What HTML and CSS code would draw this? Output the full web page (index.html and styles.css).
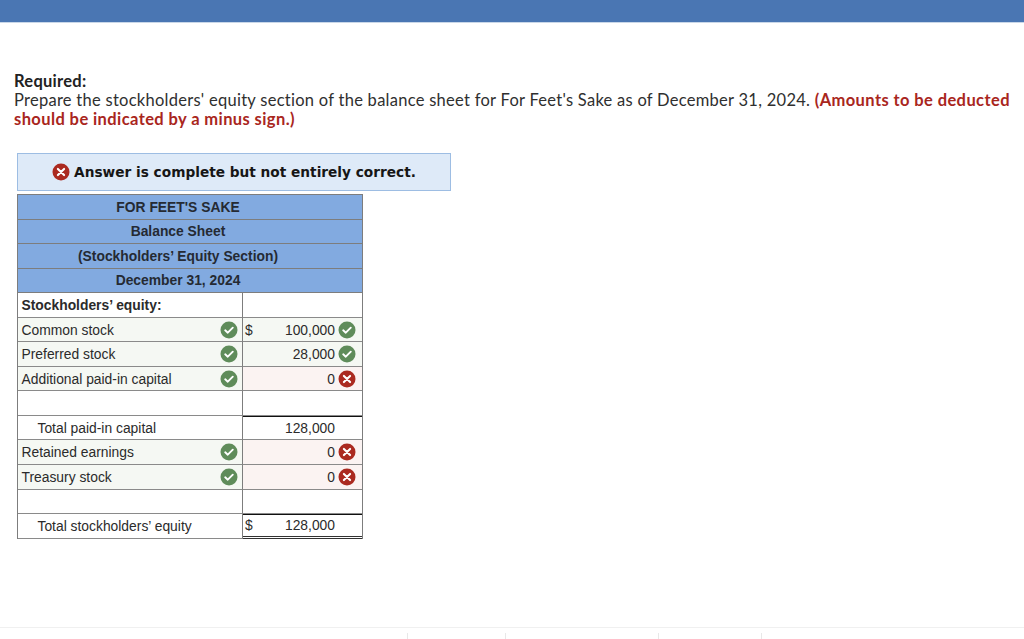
FILE: index.html
```html
<!DOCTYPE html>
<html lang="en">
<head>
<meta charset="utf-8">
<title>Balance Sheet</title>
<link rel="stylesheet" href="styles.css">
</head>
<body>
<svg class="defs" width="0" height="0" aria-hidden="true">
  <symbol id="ok" viewBox="0 0 18 18"><circle cx="9" cy="9" r="8.5" fill="#5f8c5a"/><path d="M5.2 9.3l2.6 2.4 5-5" fill="none" stroke="#fff" stroke-width="1.9" stroke-linecap="round" stroke-linejoin="round"/></symbol>
  <symbol id="no" viewBox="0 0 18 18"><circle cx="9" cy="9" r="8.5" fill="#ab2a20"/><path d="M5.9 5.9l6.2 6.2M12.1 5.9l-6.2 6.2" fill="none" stroke="#fff" stroke-width="2.1" stroke-linecap="round"/></symbol>
</svg>
<header class="topbar"></header>
<main class="content">
  <p class="prompt"><strong class="req">Required:</strong><br>Prepare the stockholders' equity section of the balance sheet for For Feet's Sake as of December 31, 2024. <strong class="warn">(Amounts to be deducted should be indicated by a minus sign.)</strong></p>
  <div class="banner"><svg class="ico"><use href="#no"/></svg><span>Answer is complete but not entirely correct.</span></div>
  <div class="sheet">
    <div class="head">FOR FEET'S SAKE</div>
    <div class="head">Balance Sheet</div>
    <div class="head">(Stockholders’ Equity Section)</div>
    <div class="head">December 31, 2024</div>

    <div class="label strong">Stockholders’ equity:</div><div class="val"></div>

    <div class="label good">Common stock<svg class="ico"><use href="#ok"/></svg></div>
    <div class="val good"><span class="cur">$</span><span class="num">100,000</span><svg class="ico"><use href="#ok"/></svg></div>

    <div class="label good">Preferred stock<svg class="ico"><use href="#ok"/></svg></div>
    <div class="val good"><span class="num">28,000</span><svg class="ico"><use href="#ok"/></svg></div>

    <div class="label good">Additional paid-in capital<svg class="ico"><use href="#ok"/></svg></div>
    <div class="val bad"><span class="num">0</span><svg class="ico"><use href="#no"/></svg></div>

    <div class="label"></div><div class="val"></div>

    <div class="label indent">Total paid-in capital</div>
    <div class="val top"><span class="num">128,000</span></div>

    <div class="label good">Retained earnings<svg class="ico"><use href="#ok"/></svg></div>
    <div class="val bad"><span class="num">0</span><svg class="ico"><use href="#no"/></svg></div>

    <div class="label good">Treasury stock<svg class="ico"><use href="#ok"/></svg></div>
    <div class="val bad"><span class="num">0</span><svg class="ico"><use href="#no"/></svg></div>

    <div class="label"></div><div class="val"></div>

    <div class="label indent">Total stockholders’ equity</div>
    <div class="val top double"><span class="cur">$</span><span class="num">128,000</span></div>
  </div>
</main>
<footer class="foot">
  <span class="tick"></span><span class="tick"></span><span class="tick"></span><span class="tick"></span>
</footer>
</body>
</html>
```
FILE: styles.css
```css
* { box-sizing: border-box; }
html, body { margin: 0; height: 639px; overflow: hidden; background: #fff; }
body { display: flex; flex-direction: column; font-family: "Liberation Sans", Arial, sans-serif; color: #2b2b2b; }
.defs { position: absolute; }
.topbar { height: 23px; flex: none; background: #4a76b3; border-bottom: 1px solid #c9d7e8; }
.content { flex: 1; padding: 49px 0 0 14px; }
.prompt {
  margin: 0; width: 1004px;
  font: 16.5px/19px Lato, "Open Sans", sans-serif;
  letter-spacing: .27px;
  color: #2f2f2f;
}
.req { font-weight: 700; color: #222; }
.warn { font-weight: 700; color: #a9261d; letter-spacing: .4px; }
.banner {
  width: 434px; height: 38px; margin: 24px 0 3px 3px;
  display: flex; align-items: center; justify-content: center; gap: 4px;
  background: #deeaf8; border: 1px solid #9dbde3;
  font: 700 13.7px "DejaVu Sans", Verdana, sans-serif; color: #161616;
}
.sheet {
  width: 346px; margin-left: 3px;
  display: grid; grid-template-columns: 225px 119px; grid-auto-rows: 24.55px;
  border-top: 1px solid #7d7d7d; border-left: 1px solid #7d7d7d; border-right: 1px solid #7d7d7d;
  font-size: 13.85px; color: #2b2b2b;
}
.head {
  grid-column: 1 / -1; display: flex; align-items: center; justify-content: center;
  padding-right: 24px;
  background: #82aae0; border-bottom: 1px solid #7d7d7d; font-weight: 700; color: #252a33;
}
.label, .val { display: flex; align-items: center; border-bottom: 1px solid #8a8a8a; }
.label { padding: 0 4px 0 3.5px; justify-content: space-between; border-right: 1px solid #7d7d7d; }
.val { padding: 0 6px 0 2px; }
.strong { font-weight: 700; }
.indent { padding-left: 19.5px; }
.good { background: #f5f8f3; }
.bad { background: #fbf3f2; }
.top { border-top: 1px solid #111; padding-bottom: 1px; }
.double { border-bottom: 3px double #333; }
.cur { flex: none; }
.num { flex: 1; text-align: right; padding-right: 21px; }
.ico { width: 18px; height: 18px; flex: none; }
.val .ico { margin-left: -18px; }
.foot {
  height: 12px; flex: none; display: flex; align-items: flex-end;
  border-top: 1px solid #f0f0f0; padding-left: 407px;
}
.tick { width: 1px; height: 6px; background: #e8e8e8; flex: none; }
.tick:nth-child(1) { margin-right: 97px; }
.tick:nth-child(2) { margin-right: 152px; }
.tick:nth-child(3) { margin-right: 102px; }
```
